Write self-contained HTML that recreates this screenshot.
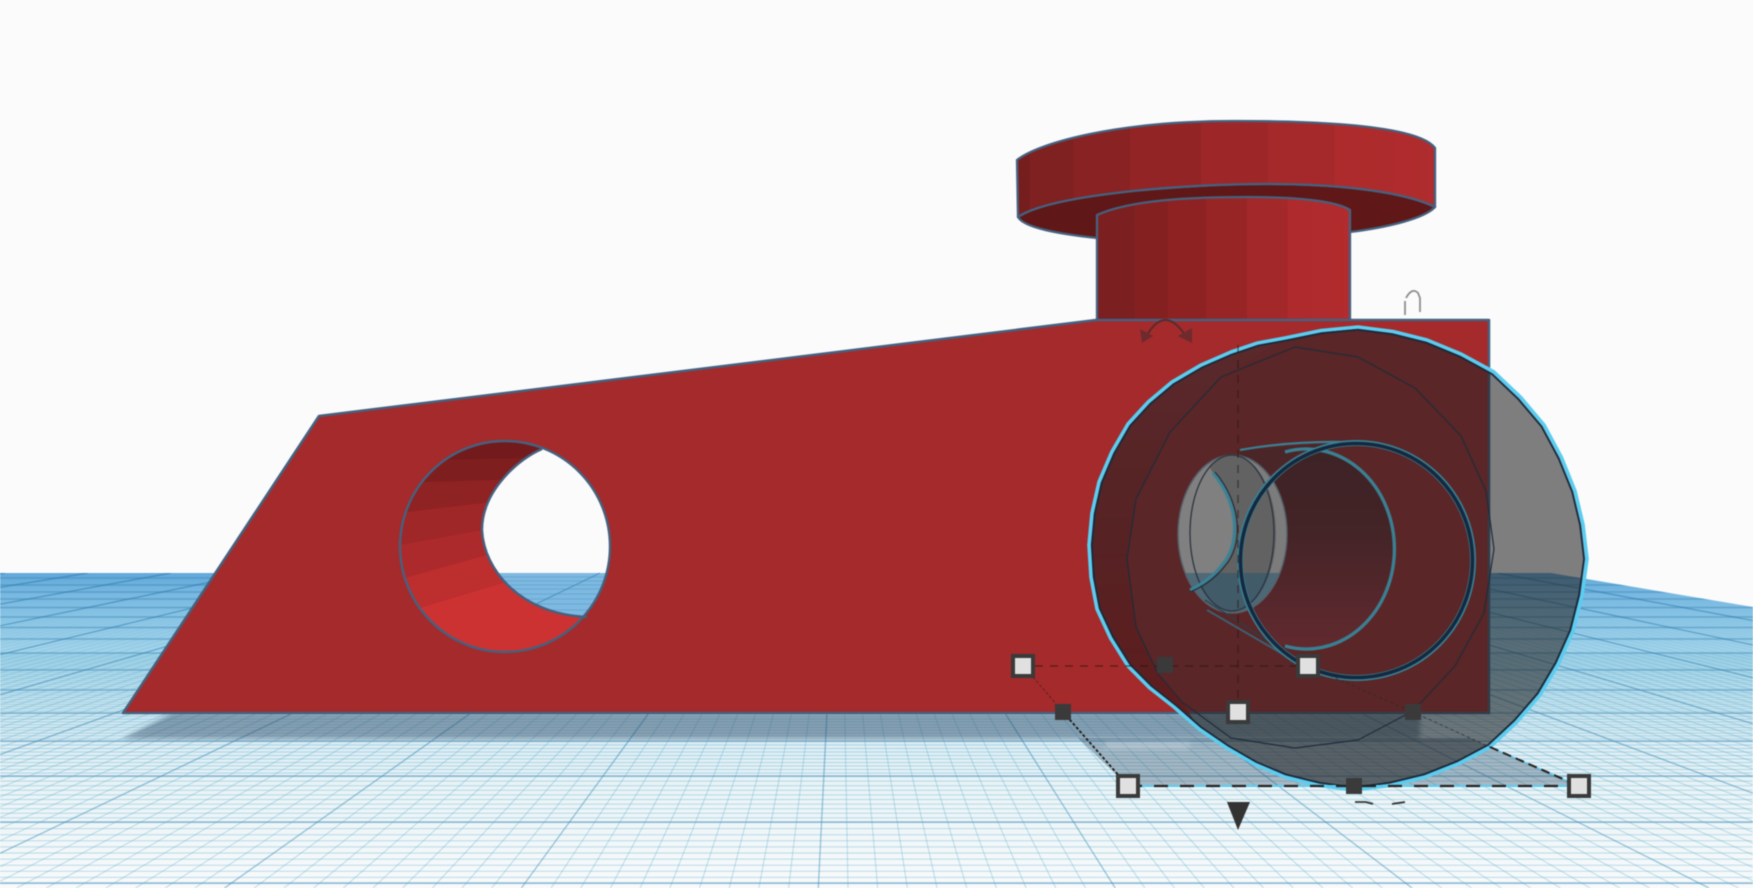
<!DOCTYPE html>
<html>
<head>
<meta charset="utf-8">
<title>Workplane</title>
<style>
html,body{margin:0;padding:0;width:1753px;height:888px;overflow:hidden;background:#fbfbfc}
svg{display:block;position:absolute;left:0;top:0;filter:blur(.45px)}
</style>
</head>
<body>
<svg xmlns="http://www.w3.org/2000/svg" width="1753" height="888" viewBox="0 0 1753 888">
<defs>
  <linearGradient id="gnd" gradientUnits="userSpaceOnUse" x1="0" y1="573" x2="0" y2="888">
    <stop offset="0" stop-color="#62a8da"/>
    <stop offset=".054" stop-color="#74b6e0"/>
    <stop offset=".149" stop-color="#8cc6e6"/>
    <stop offset=".276" stop-color="#aad8ec"/>
    <stop offset=".403" stop-color="#c8e5f0"/>
    <stop offset=".53" stop-color="#dcedf4"/>
    <stop offset=".686" stop-color="#eaf4f7"/>
    <stop offset="1" stop-color="#f8fafb"/>
  </linearGradient>
  <clipPath id="plane"><polygon points="0,573 1551,573 1753,607 1753,888 0,888"/></clipPath>
  <linearGradient id="mg" gradientUnits="userSpaceOnUse" x1="0" y1="600" x2="0" y2="680">
    <stop offset="0" stop-color="#000"/><stop offset="1" stop-color="#fff"/>
  </linearGradient>
  <mask id="fade" maskUnits="userSpaceOnUse" x="0" y="573" width="1753" height="315"><rect x="0" y="573" width="1753" height="315" fill="url(#mg)"/></mask>
  <linearGradient id="mg2" gradientUnits="userSpaceOnUse" x1="0" y1="573" x2="0" y2="800">
    <stop offset="0" stop-color="#fff"/><stop offset=".45" stop-color="#aaa"/><stop offset="1" stop-color="#777"/>
  </linearGradient>
  <mask id="fade2" maskUnits="userSpaceOnUse" x="0" y="573" width="1753" height="315"><rect x="0" y="573" width="1753" height="315" fill="url(#mg2)"/></mask>

  <line id="m0" x1="840" y1="573" x2="840" y2="888" vector-effect="non-scaling-stroke"/>
  <g id="m1"><use href="#m0"/><use href="#m0" transform="matrix(1 0 .06794 1 -30.641 0)"/></g>
  <g id="m2"><use href="#m1"/><use href="#m1" transform="matrix(1 0 .13588 1 -61.282 0)"/></g>
  <g id="m3"><use href="#m2"/><use href="#m2" transform="matrix(1 0 .27176 1 -122.564 0)"/></g>
  <g id="m4"><use href="#m3"/><use href="#m3" transform="matrix(1 0 .54352 1 -245.13 0)"/></g>
  <g id="m5"><use href="#m4"/><use href="#m4" transform="matrix(1 0 1.08702 1 -490.25 0)"/></g>
  <g id="m6"><use href="#m5"/><use href="#m5" transform="matrix(1 0 2.17405 1 -980.5 0)"/></g>
  <g id="m7"><use href="#m6"/><use href="#m6" transform="matrix(1 0 4.3481 1 -1961 0)"/></g>
  <g id="m8"><use href="#m7"/><use href="#m7" transform="matrix(1 0 8.6962 1 -3922 0)"/></g>

  <g id="j1"><use href="#m0"/><use href="#m0" transform="matrix(1 0 .67939 1 -306.4 0)"/></g>
  <g id="j2"><use href="#j1"/><use href="#j1" transform="matrix(1 0 1.35878 1 -612.81 0)"/></g>
  <g id="j3"><use href="#j2"/><use href="#j2" transform="matrix(1 0 2.71756 1 -1225.62 0)"/></g>
  <g id="j4"><use href="#j3"/><use href="#j3" transform="matrix(1 0 5.43511 1 -2451.24 0)"/></g>
  <g id="j5"><use href="#j4"/><use href="#j4" transform="matrix(1 0 10.87 1 -4902.5 0)"/></g>

  <linearGradient id="disk" gradientUnits="userSpaceOnUse" x1="1017" y1="0" x2="1435" y2="0">
    <stop offset="0" stop-color="#761e1e"/><stop offset=".03" stop-color="#761e1e"/>
    <stop offset=".03" stop-color="#7f2021"/><stop offset=".135" stop-color="#7f2021"/>
    <stop offset=".135" stop-color="#892222"/><stop offset=".27" stop-color="#892222"/>
    <stop offset=".27" stop-color="#932425"/><stop offset=".44" stop-color="#932425"/>
    <stop offset=".44" stop-color="#9d2728"/><stop offset=".6" stop-color="#9d2728"/>
    <stop offset=".6" stop-color="#a5292a"/><stop offset=".76" stop-color="#a5292a"/>
    <stop offset=".76" stop-color="#ad2b2c"/><stop offset="1" stop-color="#b02c2e"/>
  </linearGradient>
  <linearGradient id="stem" gradientUnits="userSpaceOnUse" x1="1097" y1="0" x2="1351" y2="0">
    <stop offset="0" stop-color="#7c1f20"/><stop offset=".15" stop-color="#7c1f20"/>
    <stop offset=".15" stop-color="#852021"/><stop offset=".28" stop-color="#852021"/>
    <stop offset=".28" stop-color="#8e2223"/><stop offset=".43" stop-color="#8e2223"/>
    <stop offset=".43" stop-color="#982526"/><stop offset=".59" stop-color="#982526"/>
    <stop offset=".59" stop-color="#a32829"/><stop offset=".75" stop-color="#a32829"/>
    <stop offset=".75" stop-color="#ae2a2c"/><stop offset="1" stop-color="#b22c2e"/>
  </linearGradient>
  <clipPath id="holeclip"><ellipse cx="505" cy="546.5" rx="105" ry="105.5"/></clipPath>

  <linearGradient id="lens" gradientUnits="userSpaceOnUse" x1="0" y1="450" x2="0" y2="650">
    <stop offset="0" stop-color="#3e2326"/><stop offset=".4" stop-color="#432427"/><stop offset="1" stop-color="#622a2f"/>
  </linearGradient>
  <linearGradient id="cres" gradientUnits="userSpaceOnUse" x1="0" y1="340" x2="0" y2="715">
    <stop offset="0" stop-color="#5a2a2c"/><stop offset=".5" stop-color="#562224"/><stop offset="1" stop-color="#5f1b1c"/>
  </linearGradient>
  <clipPath id="ringA"><ellipse cx="1356.5" cy="560.5" rx="116.5" ry="117.5"/></clipPath>
  <clipPath id="disc"><ellipse cx="1232.5" cy="534" rx="54.5" ry="79"/></clipPath>

  <polygon id="op" points="1358,327 1393,331.5 1427,340 1461.5,354.3 1494,372 1520.5,397.2 1544,425 1561.3,457.2 1575,491 1583,524.7 1587,559 1582,595.3 1573,631 1558.3,663.9 1540,695 1516.5,722.3 1490,747 1458.5,763.7 1425,777 1390,785.5 1354,790 1319.3,785.5 1285,777 1255.3,764.4 1227,748 1199.2,729 1174,707 1149.4,687.6 1128,666 1110.6,638.2 1097,609 1091,577.2 1089,545 1092,513.1 1099,482 1111.7,452.2 1128,424 1148.5,401.7 1172,382 1200.3,365.4 1231,352 1257.3,343.1 1285,338 1321.4,330.5"/>
</defs>

<rect width="1753" height="888" fill="#fbfbfc"/>

<!-- ground -->
<g clip-path="url(#plane)">
  <rect y="573" width="1753" height="315" fill="url(#gnd)"/>
  <g fill="none" stroke="#5aa7c9" stroke-opacity=".38">
    <path d="M876 822V888" stroke-width="1753" stroke-dasharray="1 5.1"/>
    <path d="M876 776V822" stroke-width="1753" stroke-dasharray="1 3.6"/>
    <path d="M876 741V776" stroke-width="1753" stroke-dasharray="1 2.5"/>
    <path d="M876 713V741" stroke-width="1753" stroke-dasharray="1 1.8"/>
    <path d="M876 690V713" stroke-width="1753" stroke-dasharray=".9 1.4"/>
    <path d="M876 670V690" stroke-width="1753" stroke-dasharray=".8 1.2"/>
    <path d="M876 653V670" stroke-width="1753" stroke-dasharray=".7 1"/>
  </g>
  <path fill="none" stroke="#3d86b4" stroke-opacity=".5" stroke-width="1.4" d="M0 883H1753M0 822H1753M0 776H1753M0 741H1753M0 713H1753M0 690H1753M0 670H1753M0 653H1753M0 639H1753M0 627.5H1753M0 617H1753M0 607.5H1753M0 599H1753M0 592H1753M0 585H1753M0 578H1753"/>
  <g mask="url(#fade)">
    <use href="#m8" stroke="#5aa7c9" stroke-opacity=".38" stroke-width="1" transform="matrix(1 0 -6.8435 1 3086.4 0)"/>
  </g>
  <g mask="url(#fade2)">
    <use href="#j5" stroke="#2f7cae" stroke-opacity=".6" stroke-width="1.4" transform="matrix(1 0 -13.637 1 6150.3 0)"/>
  </g>
</g>

<!-- shadows -->
<polygon points="172,713 1420,713 1420,739 122,739" fill="rgb(52,80,106)" fill-opacity=".48" style="filter:blur(2.2px)"/>
<polygon points="1078,738 1128,786 1579,786 1470,738" fill="rgb(52,80,106)" fill-opacity=".36"/>
<rect x="1105" y="742" width="85" height="7" fill="#fff" fill-opacity=".24" style="filter:blur(2.5px)"/>

<!-- disk -->
<path d="M1018 217C1024 228 1060 234 1097 238L1350 232C1390 227 1425 218 1435 207C1400 190 1330 184 1267 184C1180 184 1050 195 1018 217Z" fill="#5f1717" stroke="#45617f" stroke-width="2.3" stroke-linejoin="round"/>
<path d="M1017 160C1040 142 1120 121 1235 121C1340 121 1420 128 1435 148V207C1400 190 1330 184 1267 184C1180 184 1050 195 1018 217Z" fill="url(#disk)" stroke="#45617f" stroke-width="2.3" stroke-linejoin="round"/>
<!-- stem -->
<path d="M1097 215C1130 200 1190 197 1247 197C1290 197 1335 200 1350 210V321H1097Z" fill="url(#stem)" stroke="#45617f" stroke-width="2.3" stroke-linejoin="round"/>

<!-- body -->
<polygon points="123,713 319,416 1096,320 1489,320 1489,713" fill="#a52a2b" stroke="#45617f" stroke-width="2.5" stroke-linejoin="round"/>

<!-- hole in body -->
<g clip-path="url(#holeclip)">
  <rect x="395" y="435" width="220" height="225" fill="#cd3233"/>
  <polygon points="390,435 620,435 620,566 560,566 390,617" fill="#bd2e2f"/>
  <polygon points="390,435 620,435 620,535 560,535 390,582" fill="#ad2a2c"/>
  <polygon points="390,435 620,435 620,516 560,516 390,547" fill="#a02728"/>
  <polygon points="390,435 620,435 620,494 560,494 390,514" fill="#8f2223"/>
  <polygon points="390,435 620,435 620,478 560,478 390,483" fill="#7f1e1f"/>
  <polygon points="390,435 620,435 620,457 560,457 390,461" fill="#731a1c"/>
  <path d="M542 449C520 458 482 490 482 530C484 570 520 614 583 617L620 617V440H542Z" fill="#fbfbfc"/>
  <clipPath id="seeclip"><path d="M542 449C520 458 482 490 482 530C484 570 520 614 583 617L620 617V440H542Z"/></clipPath>
  <g clip-path="url(#seeclip)">
    <rect x="470" y="573" width="150" height="50" fill="#7db9e0"/>
    <path d="M470 577H620M470 581H620M470 585H620M470 589H620M470 594H620M470 599H620M470 604H620M470 610H620" stroke="#4d93c3" stroke-opacity=".45" stroke-width="1"/>
    <path d="M534 605L600 573" stroke="#3d86b4" stroke-opacity=".7" stroke-width="1.2"/>
  </g>
</g>
<path d="M542 449C520 458 482 490 482 530C484 570 520 614 587 617" fill="none" stroke="#45617f" stroke-width="2.4"/>
<ellipse cx="505" cy="546.5" rx="105" ry="105.5" fill="none" stroke="#45617f" stroke-width="2.4"/>

<!-- small grey arch glyph -->
<path d="M1405 315V301M1406 298Q1412 287 1418 293L1420 298V312" fill="none" stroke="#8e8e8e" stroke-width="1.8"/>

<!-- rotate arrow -->
<path d="M1147 335Q1165 305 1185 335" fill="none" stroke="#5a2a2c" stroke-width="2"/>
<polygon points="1140,329 1142,343 1153,336" fill="#6e2a2c"/>
<polygon points="1192,328 1192,343 1178,336" fill="#6e2a2c"/>

<!-- translucent selected object -->
<use href="#op" fill="rgb(36,36,36)" fill-opacity=".58"/>
<!-- crescent -->
<polygon points="1285,338 1257.3,343.1 1231,352 1200.3,365.4 1172,382 1148.5,401.7 1128,424 1111.7,452.2 1099,482 1092,513.1 1089,545 1091,577.2 1097,609 1110.6,638.2 1128,666 1149.4,687.6 1174,707 1195,722 1182,702 1158,674 1136,627 1127,559 1136,499 1170,432 1221,377" fill="url(#cres)" fill-opacity=".85"/>

<!-- lens / hole interior -->
<g clip-path="url(#ringA)">
  <ellipse cx="1307" cy="549" rx="88" ry="100" fill="url(#lens)"/>
</g>
<polygon points="1240,450 1347,442 1300,452 1262,480 1240,520" fill="#4a2628"/>

<!-- grey disc seen through -->
<g clip-path="url(#disc)">
  <rect x="1170" y="450" width="125" height="170" fill="#7c7c7c"/>
  <ellipse cx="1232" cy="533" rx="44" ry="78" fill="#626262"/>
  <path d="M1213 473C1240 505 1240 545 1222 565C1212 578 1200 585 1190 590L1170 600V450H1200Z" fill="#808080"/>
  <rect x="1170" y="573" width="125" height="45" fill="#28556e" fill-opacity=".55"/>
</g>
<ellipse cx="1232.5" cy="534" rx="54.5" ry="79" fill="none" stroke="#55606a" stroke-width="1.5"/>
<ellipse cx="1232" cy="533" rx="42" ry="78" fill="none" stroke="#2b3540" stroke-width="1.3"/>
<path d="M1213 473C1240 505 1240 545 1222 565C1212 578 1200 585 1190 590" fill="none" stroke="#3a8396" stroke-width="3"/>
<path d="M1215 472C1243 505 1243 546 1225 566C1214 580 1202 587 1190 592" fill="none" stroke="#22303c" stroke-width="1.2"/>

<!-- ring B teal -->
<path d="M1285 452A88 100 0 1 1 1285 646" fill="none" stroke="#3a7f92" stroke-width="3.4"/>
<!-- tangents -->
<path d="M1240 450Q1290 441 1347 442" fill="none" stroke="#3a7f92" stroke-width="2.2"/>
<path d="M1207 610L1293 660" fill="none" stroke="#3a6070" stroke-width="2"/>
<path d="M1205 600L1285 652" fill="none" stroke="#2b3f4d" stroke-width="1.2"/>

<!-- ring A -->
<ellipse cx="1356.5" cy="560.5" rx="116.5" ry="117.5" fill="none" stroke="#3a7f92" stroke-width="6"/>
<ellipse cx="1356.5" cy="560.5" rx="116" ry="117" fill="none" stroke="#14293f" stroke-width="3.6"/>

<!-- thin back polygon -->
<polygon points="1295,347 1358,357 1415,388 1461,436 1486,491 1494,549 1484,613 1455,666 1413,711 1358,740 1295,748 1231,738 1182,702 1158,674 1136,627 1127,559 1136,499 1170,432 1221,377" fill="none" stroke="#1f2c3a" stroke-width="1.2" stroke-linejoin="round"/>

<!-- outer outline -->
<use href="#op" fill="none" stroke="#5bcdf0" stroke-width="3.6" stroke-linejoin="round"/>
<use href="#op" fill="none" stroke="#1a2a3c" stroke-width="1.8" stroke-linejoin="round" transform="translate(1338 558.5) scale(.988) translate(-1338 -558.5)"/>

<!-- selection box lines -->
<path d="M1035 666H1298" fill="none" stroke="#2a1414" stroke-opacity=".65" stroke-width="1.3" stroke-dasharray="8 7"/>
<path d="M1238 345V700" fill="none" stroke="#2a1414" stroke-opacity=".6" stroke-width="1.3" stroke-dasharray="8 7"/>
<path d="M1033 677L1063 712" fill="none" stroke="#3a2020" stroke-opacity=".7" stroke-width="1" stroke-dasharray="3 2"/>
<path d="M1063 712L1128 786" fill="none" stroke="#1c1c1c" stroke-width="1.8" stroke-dasharray="3 2"/>
<path d="M1308 666L1413 712L1490 747" fill="none" stroke="#2a2a2a" stroke-opacity=".6" stroke-width="1.1" stroke-dasharray="3 3"/>
<path d="M1490 747L1579 786" fill="none" stroke="#5bcdf0" stroke-width="1.4"/>
<path d="M1490 747L1579 786" fill="none" stroke="#222" stroke-width="2" stroke-dasharray="9 5"/>
<path d="M1128 786H1579" fill="none" stroke="#5bcdf0" stroke-width="2"/>
<path d="M1128 786H1579" fill="none" stroke="#222" stroke-width="2.2" stroke-dasharray="14 12"/>

<!-- handles -->
<g fill="#e0e0e0" stroke="#3a3a3a" stroke-width="4">
  <rect x="1013" y="656" width="20" height="20"/>
  <rect x="1298" y="656" width="20" height="20"/>
  <rect x="1228" y="702" width="20" height="20"/>
  <rect x="1118" y="776" width="20" height="20"/>
  <rect x="1569" y="776" width="20" height="20"/>
</g>
<g fill="#3a3a3a">
  <rect x="1157" y="657" width="16" height="16"/>
  <rect x="1055" y="704" width="16" height="16"/>
  <rect x="1405" y="704" width="16" height="16"/>
  <rect x="1346" y="778" width="16" height="16"/>
</g>
<polygon points="1227,802 1250,802 1238,830" fill="#333"/>
<path d="M1355 802H1366L1373 804M1392 804L1405 802" fill="none" stroke="#333" stroke-width="1.8"/>
</svg>
</body>
</html>
